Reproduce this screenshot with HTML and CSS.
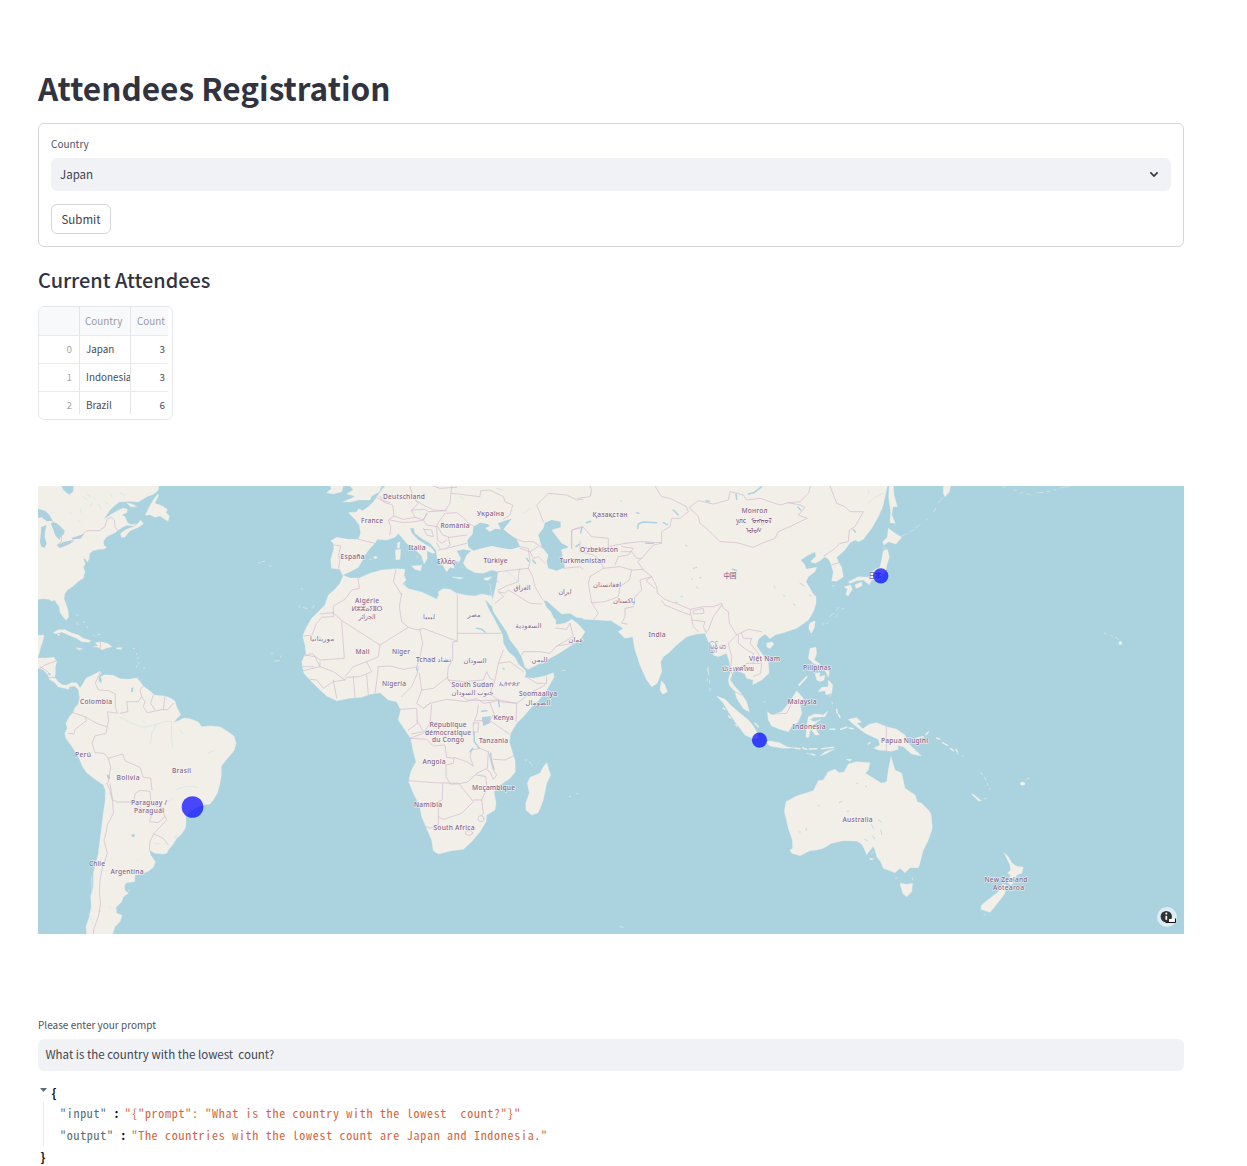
FILE: index.html
```html
<!DOCTYPE html>
<html lang="en">
<head>
<meta charset="utf-8">
<title>Attendees Registration</title>
<link rel="stylesheet" href="styles.css">
</head>
<body>
<main class="page">
  <h1 class="title">Attendees Registration</h1>
  <form class="form">
    <label class="label">Country</label>
    <div class="select"><span>Japan</span>
      <svg class="chevron" viewBox="0 0 10 7" width="10" height="7"><path d="M1.4 1.4 5 5l3.600-3.600"/></svg>
    </div>
    <button class="submit" type="button">Submit</button>
  </form>
  <h2 class="subtitle">Current Attendees</h2>
  <div class="table">
    <div class="row head"><span class="idx"></span><span class="name">Country</span><span class="num">Count</span></div>
    <div class="row"><span class="idx">0</span><span class="name">Japan</span><span class="num">3</span></div>
    <div class="row"><span class="idx">1</span><span class="name">Indonesia</span><span class="num">3</span></div>
    <div class="row last"><span class="idx">2</span><span class="name">Brazil</span><span class="num">6</span></div>
  </div>
  <svg class="map" viewBox="38 486 1146 448" width="1146" height="448">
    <!-- Americas -->
    <g transform="translate(30 480) scale(.33333)">
      <g class="land">
        <path d="M24 18H386L385 30 372 42 350 50 335 60 325 66 300 64 268 66 255 76 240 90 225 112 222 118 240 105 262 92 280 84 292 88 290 98 275 104 285 110 290 122 295 134 280 140 265 150 255 158 240 165 228 172 220 185 222 196 230 202 222 207 205 208 188 212 178 222 178 235 172 246 166 236 160 236 166 252 160 262 165 275 162 285 160 295 145 304 130 318 112 330 104 342 102 356 108 372 114 392 116 412 108 421 100 412 90 396 88 380 80 370 74 360 66 364 56 358 40 356 24 358Z"/>
        <path d="M272 160 290 148 310 140 325 130 332 120 340 132 325 142 300 152 284 172 274 172ZM346 106 358 80 370 60 384 42 385 48 374 70 388 74 400 80 412 88 408 98 418 108 414 124 402 116 390 108 375 112 360 104ZM290 69 305 71 320 80 302 80ZM292 128 305 134 318 131 308 138 294 136Z"/>
        <path d="M70 458 85 449 105 449 125 459 145 465 160 475 182 482 178 487 155 485 140 475 115 465 95 456 78 461ZM138 503 158 506 148 510ZM190 500 205 498 196 488 215 486 232 490 246 500 230 504 215 510 205 502ZM260 503 276 503 274 508 260 507ZM83 462 90 463 86 468Z"/>
        <path d="M24 466H42L38 485 32 500 28 520 24 530ZM24 534 50 534 72 532 80 545 76 560 76 580 74 592 84 605 96 614 110 616 125 608 140 608 150 624 160 640 148 650 146 630 134 618 118 620 116 628 100 624 84 620 75 608 58 598 54 584 40 570 24 564Z"/>
        <path d="M146 630 160 610 168 595 190 584 210 574 214 578 206 590 206 604 214 610 216 600 212 590 225 584 250 586 270 596 295 598 320 594 328 602 340 618 356 630 375 646 405 648 425 656 435 664 440 680 446 692 452 704 440 716 430 728 445 722 462 714 480 716 505 726 515 740 540 738 570 740 595 756 612 768 618 790 612 812 595 832 574 858 574 885 570 910 562 940 548 962 540 972 522 974 505 980 480 995 468 1010 468 1030 466 1045 455 1062 440 1075 430 1092 415 1110 410 1120 400 1122 375 1120 358 1110 362 1125 376 1145 370 1162 355 1174 335 1182 315 1185 314 1205 290 1208 284 1215 284 1230 295 1240 280 1250 275 1265 258 1282 260 1300 276 1306 270 1325 255 1340 248 1362H170L168 1340 178 1310 184 1280 182 1250 190 1220 190 1180 198 1150 205 1120 210 1080 215 1040 220 1000 226 960 226 930 220 914 195 898 170 878 158 860 145 830 125 798 108 775 104 760 112 745 108 730 118 710 130 697 134 685 145 672 150 650Z"/>
      </g>
      <g class="specks"><path d="M138 405 144 406M140 426 144 434M160 425 164 428M170 440 174 444M190 464 194 468M204 464 210 463M310 505h4M320 520v4M324 532v5M326 548v4M320 558v4M342 562v4M324 590v4M686 248 692 249M696 245 704 244M718 257 724 258M814 326 817 327M808 378v4M820 383 832 386M848 384 852 376M726 518v4M734 543 748 542M752 528v3M298 1232h-4"/></g>
      <g class="water">
        <path d="M24 86 45 92 58 104 68 122 50 124 35 112 24 114ZM34 140 50 136 46 150 44 170 50 190 44 203 34 200 30 185 32 165ZM62 128 78 128 90 138 104 152 102 162 92 170 88 180 76 166 70 150ZM80 196 100 186 128 180 120 192 90 204ZM124 174 150 166 162 162 152 176 128 178ZM95 18 100 30 118 44 130 34 130 18ZM304 625 310 622 309 636 303 635ZM230 882 240 888 240 898 232 894ZM304 1064 314 1062 313 1072 306 1070ZM54 576 64 584 56 586Z"/>
      </g>
      <path class="rivers" d="M160 50 172 60M186 70 180 80M190 50 196 58M240 40 246 50M206 72 212 86M150 84 154 98M120 94 122 102M172 44 182 50M270 38 282 46M226 66 234 72M146 120 152 126M62 100 70 96M270 712 300 728 340 742 380 733 400 726 425 724M380 733 365 760 362 790M425 724 424 770 428 800M452 752 458 762M534 820 552 812M338 724 346 728M440 928 470 918 505 922M412 966 428 954M440 1064 434 1074M374 1090 390 1092M236 940 242 944M322 1136 326 1140M236 1280 242 1284M206 1294 212 1294M184 1190 186 1240M176 1300 188 1330"/>
      <path class="borders" d="M24 95 60 118 80 135 95 160 94 185 82 195 92 200 128 186 130 176 150 172 170 152 208 152 225 140 232 116 245 112 253 120 255 140 262 150M30 565 45 555 78 543M54 576 30 560M58 592 76 592M212 488 210 506M212 575 200 600 196 610 206 630 235 632 256 642 256 680 262 700 232 695 236 720 228 758M128 698 165 710 170 722 135 748 132 762 115 760M165 710 200 730 230 740M228 760 195 768 186 790 195 818 222 820 235 835 278 822 285 842 330 862 340 892 362 894 366 930M235 835 242 860 238 885 234 910M240 912 248 960 262 966 310 966 316 940 330 931 360 934 362 960 375 978 395 982 405 1010M310 966 340 990 365 1005 358 1025 385 1028 405 1010 410 1020 372 1060 360 1085 358 1110M372 1062 400 1075 415 1095M230 910 240 930 248 965 250 1000 232 1035 228 1060 222 1080 232 1120 218 1160 210 1200 208 1240 212 1270 205 1310 192 1345 190 1362M342 615 330 630 335 650 325 665 290 665 294 695 270 700M335 650 345 665 340 680 352 698 400 688 412 690 430 670M370 645 362 670 375 690M405 650 402 670 400 690"/>
    </g>
    <!-- Europe, Arabia and Africa -->
    <g transform="translate(290 480) scale(.33333)">
      <g class="land">
        <path d="M158 285 150 268 125 265 122 240 132 205 130 190 122 182 140 172 175 178 205 178 212 160 208 135 195 118 175 98 200 96 206 86 218 92 235 80 250 66 262 48 275 30 285 18H960V422L900 418 860 412 840 400 815 402 795 385 770 362 762 362 768 380 782 395 790 412 797 420 798 434 825 430 845 418 862 430 885 455 870 480 845 495 810 518 775 538 740 555 715 568 705 562 700 545 695 530 680 505 660 480 650 455 630 425 610 395 605 375 610 350 615 330 620 305 625 275 605 270 580 280 555 278 530 265 520 250 530 225 545 212 520 208 500 212 512 235 508 245 490 240 492 265 480 262 470 275 455 250 442 235 438 210 420 190 395 175 375 160 372 145 360 143 365 160 385 180 425 205 435 218 428 220 410 212 412 235 402 252 395 228 375 208 350 190 335 172 325 160 315 172 290 180 262 178 255 190 240 205 225 225 215 245 205 262 180 275 165 282Z"/>
        <path d="M160 65 185 55 195 48 170 42 190 30 180 18H275L268 35 245 48 240 60 205 60 180 66ZM110 38 125 25 120 18H160L155 35 130 42ZM365 258 395 256 392 272 375 268ZM316 210 332 208 330 238 318 240ZM322 190 330 185 328 205 322 204ZM486 291 520 293 510 297ZM582 295 605 290 595 301 584 300ZM250 232 258 228 262 234 254 236Z"/>
        <path d="M160 286 180 294 208 294 240 280 275 270 320 266 345 268 342 285 348 300 338 312 355 326 395 336 425 350 440 358 447 345 445 335 460 326 480 328 500 340 530 346 555 348 575 342 605 348 608 362 604 378 590 362 585 360 595 385 612 415 625 440 638 465 640 490 655 515 675 532 685 552 705 570 708 582 704 592 730 595 765 588 790 578 792 592 770 630 745 662 730 675 700 710 680 730 662 760 658 785 668 820 675 840 676 875 660 895 630 915 612 935 618 970 615 990 590 1005 588 1025 570 1055 545 1085 520 1108 485 1112 445 1122 430 1112 425 1080 410 1045 395 1010 390 980 370 940 356 905 362 875 378 845 370 815 362 775 345 750 325 720 332 690 320 665 295 660 270 638 240 643 215 652 180 655 140 662 110 648 85 625 60 600 42 580 35 545 48 520 45 495 38 468 50 440 65 415 85 395 105 375 115 345 135 328 150 310Z"/>
        <path d="M770 848 782 885 770 910 760 960 745 998 725 1005 708 990 707 970 718 940 712 910 720 892 750 880 760 860Z"/>
      </g>
      <g class="specks"><path d="M380 230 384 232M816 571h10M706 840h4M718 848h4M724 854h3M838 950h4M860 941h4M240 238h4M344 312h3M500 245 506 250M514 258 518 262"/></g>
      <g class="water">
        <path d="M535 200 532 180 548 162 550 140 570 128 592 132 600 138 585 144 600 155 615 146 632 148 624 130 645 122 665 116 655 130 640 148 655 160 680 178 690 200 665 208 640 205 605 198 575 205 550 212ZM745 165 760 145 765 128 785 120 812 125 812 142 785 150 800 170 815 190 835 200 830 205 814 208 820 245 825 262 800 272 775 265 770 245 775 225 755 200ZM575 712 602 708 600 730 580 738ZM675 160 665 150 672 156Z"/>
      </g>
      <path class="lakes" d="M552 755 553 785 568 805M602 820 605 845 612 868M560 445 575 448 585 456M625 660 628 680M540 815 548 805M380 565 382 572M710 235 716 244M728 240 736 250M575 694 590 692M640 565 642 568"/>
      <path class="rivers" d="M535 895 560 885 585 885M600 312 605 350M510 50 520 56M700 100 720 85M650 275 665 285 710 340M620 25 640 30"/>
      <path class="borders" d="M205 178 255 190M132 195 152 198 146 225 150 240 146 265M255 48 285 68 308 75 312 108 295 120 302 140 300 165M270 48 275 60 300 68M360 18 368 50 385 70 365 90 375 112 340 118 312 108M368 55 400 75 430 90 465 92 480 70 485 18M365 90 405 88 415 95 470 92M375 112 400 120 412 100M300 120 340 128 375 125 400 120 410 135 440 140M410 100 400 120M485 40 570 50 572 32 600 30 640 50 645 65 668 75 660 105 640 118M470 100 500 98 520 112 535 130 550 138M465 100 440 135 458 165 480 172 530 165M400 145 410 165 430 170 425 150 402 148M440 140 442 180 455 190 470 180M475 172 480 195 470 205 530 190M445 210 470 205M440 190 450 205M690 200 715 205 720 245 715 265 670 270 625 275M660 170 700 185 730 185 760 205M690 205 720 215 745 200M720 215 730 235 745 230 765 250M715 265 728 290 735 320 755 355 765 365M625 330 650 318 685 305 685 285 690 265M615 370 640 350 625 335 645 340 655 330 720 370 755 372M612 300 625 305M760 125 740 75 775 40 830 45 860 60 900 55M845 205 845 150 875 140 900 145M820 265 870 260 900 285 905 370 920 390 905 418M695 525 700 515 750 515 780 520 800 498 850 490M800 498 850 470 840 430M797 444 830 448 840 430M430 18 450 25 500 22"/>
      <path class="borders" d="M38 468 65 466 80 430 95 412 130 410 130 398 90 402M130 400 130 378 165 358 185 330 208 325 204 295M130 400 160 425 270 495 355 442 385 450 400 445 502 484 502 345M155 425 163 535 90 540 65 520 45 528M335 340 328 380 335 425 355 442M318 270 310 305 335 345M502 460H632M502 484 488 486 488 540 475 560 472 590 475 600M390 450 398 490 390 530 380 560M270 495 265 530 230 545 190 560 165 590M265 560 300 558 340 568 385 560 382 580 365 620 335 650M230 545 245 575 210 590 170 592 165 600M265 560 262 590 255 640M130 600 140 655M190 590 195 655M230 585 235 645M45 525 75 530 90 560 40 572M90 545 90 560 130 575 165 600 130 605 100 625 80 600 60 598M388 580 395 630 430 625 475 590M395 630 380 670 400 685 420 670M475 600 520 605 580 600 590 575 600 595 610 600M640 510 625 550 615 600 600 640 630 665 680 670 720 640 765 615M625 550 660 545 700 575M708 590 740 610 770 610 770 590M475 600 500 630 530 660 580 662 625 660M40 560 70 560"/>
      <g transform="translate(270 540)">
        <path class="borders" d="M130 145 150 130 200 118 260 125 290 115 310 130 340 125 355 120 410 130 408 185M60 148 110 145 112 190 85 210M110 180 130 215 95 222M155 135 150 190 130 220 90 235 140 238 160 258 195 255 200 292 222 295 220 310 198 315 198 350 210 370M86 362 160 368 235 370M222 292 260 305 280 318 270 290 275 270 300 265 325 275 322 325 290 340 265 365 235 372 210 372M188 372 187 420 175 425 175 495 150 505 138 500M175 470 190 478 245 460 280 425 238 372M280 420 305 420 320 385 318 350 290 345M305 420 310 460 303 468M288 182 330 182 388 222M340 298 375 300 400 288M330 130 342 160 330 182M325 275 340 330 350 345 340 358 330 335 322 330M295 135 292 160 280 190 280 225M280 190 296 188 294 215 280 218"/>
        <ellipse class="borders" cx="267" cy="519" rx="11" ry="7"/><circle class="borders" cx="303" cy="476" r="9"/>
      </g>
    </g>
    <!-- Asia -->
    <g transform="translate(570 480) scale(.33333)">
      <path class="land" d="M40 18H952L945 50 938 80 925 110 905 145 880 178 865 185 855 180 840 188 825 210 800 232 805 245 815 262 820 290 800 304 785 302 790 275 782 250 775 238 765 230 750 242 735 250 722 245 738 228 735 215 715 225 692 240 705 255 708 268 740 262 735 275 715 290 708 305 720 325 728 340 738 350 738 370 730 395 715 420 680 445 640 458 615 465 600 476 585 462 565 478 560 498 575 520 595 545 597 580 575 600 548 614 550 600 530 595 525 582 510 575 495 565 488 580 480 600 495 620 512 638 530 665 538 695 520 686 500 655 495 635 478 615 475 600 482 575 478 545 470 520 445 530 430 525 432 505 415 485 405 460 380 462 350 470 320 495 300 515 280 530 272 545 275 575 262 610 245 620 230 600 210 555 195 510 188 470 165 475 145 455 160 445 135 430 120 420 40 418Z"/>
      <path class="land" d="M274 602 285 615 292 635 278 643 270 630ZM590 490 605 485 612 492 600 506 590 500ZM720 430 735 423 732 445 724 460 716 445ZM720 505 738 502 740 520 733 540 750 552 748 558 730 550 715 535ZM735 580 750 578 748 590 765 586 762 600 750 605 740 600ZM765 570 778 575 775 592ZM775 600 788 615 785 640 768 645 765 632 745 635 755 622 775 620ZM684 615 710 588 712 592 688 618Z"/>
      <path class="specks" d="M415 560V580M412 595v6M420 625v8M780 410 790 400M800 390 805 382M790 318 792 316"/>
      <path class="lakes" d="M203 145 205 132 220 126 260 128M535 42 552 38 575 20M228 190 250 190M18 200 26 194M32 158 36 142M50 128 62 124M200 98 206 100M310 90 325 105M280 128 292 134M408 62 418 64M498 42 500 58M488 268 500 272M684 82 692 90M850 148 856 156"/>
      <path class="lakes small" d="M346 196 352 198M370 265 380 262M364 296 368 298M388 292 394 294M612 318 616 324M690 310 704 318M718 345 724 348M670 372 676 376M640 345 645 350M60 45 64 42M150 60 154 64M380 320 384 326M316 366 322 368M332 350 338 350"/>
      <path class="borders" d="M358 82 385 62 430 72 475 60 480 35 520 45 530 60 570 55 630 75 655 68 690 75 705 82 685 105 712 115 690 125 660 140 625 155 615 175 575 190 550 202 500 188 450 185 415 150 390 130 385 110ZM350 82 355 95 330 115 305 115 300 140 275 155 275 190 250 195 215 235 203 245 220 270 245 290 260 320 262 340 285 358 330 375 360 388 400 380 430 380 455 370 460 385 475 395 478 430 500 465 535 448 575 455M255 18 275 50 300 55 350 80M22 55 60 50 65 30 60 18M655 68 690 65 715 40 722 18M780 18 800 70 825 80 840 95 880 95 855 140 838 150 835 185 810 190 795 205 762 228M165 190 210 185 275 188M155 200 190 205 175 225 145 230 135 255M155 215 185 215 200 235 215 235M5 205V150L40 142 65 170 115 175 115 200 165 190M30 185 30 215 70 225 90 240 100 265M60 290 100 265 150 260 185 270 220 268M185 270 178 300 150 320 145 350 105 365 65 368 55 310 60 290M65 368 85 400 70 420M245 290 210 300 215 330 195 350 190 380 165 385 165 410 155 430 172 432M245 290 228 302 255 325M275 362 285 375 320 390 360 405 362 390M370 392 400 385 402 400 372 402ZM362 400 370 440 385 455M365 420 405 425 400 440 410 460M455 375 430 410 415 450 408 455M500 465 475 490 485 530 482 570 490 590M505 465 505 490 530 510 550 520 550 550M515 460 520 475 545 475 540 490 565 520 575 550 572 580 550 590M520 570 530 550 570 550M785 255 808 248M490 632 515 645"/>
    </g>
    <!-- Southeast Asia -->
    <g transform="translate(690 620) scale(.33333)">
      <path class="land" d="M80 228 105 238 125 258 150 280 175 300 190 318 200 335 205 355 190 356 165 345 150 325 135 305 115 275 100 250ZM232 275 245 285 275 275 300 245 320 212 340 235 330 250 335 280 325 305 305 320 295 335 270 328 245 318 235 300ZM225 365 240 363 268 368 290 380 312 384 280 385 240 378ZM355 290 375 282 400 285 414 273 405 290 370 292 360 300 375 305 392 298 370 315 388 345 375 345 362 325 356 352 348 352 350 320ZM475 298 500 293 514 306 500 310 518 326 540 312 560 308 590 320 620 328 645 345 655 370 694 408 665 402 640 380 622 376 625 388 605 394 565 390 552 384 570 375 565 358 530 342 515 332 485 308ZM390 408 405 395 434 386 410 400Z"/>
      <path class="specks wide" d="M315 385 330 386M338 384 350 388M358 387 380 386M395 386 430 382M440 268 442 280M446 284 450 292M420 328 434 328M452 328 470 322M478 324 490 326M680 355 700 350M708 344 715 336M740 354 750 358M758 368 772 376M782 386 790 392M798 388 802 396M535 372 540 368M100 264 104 268M116 288 122 294M138 314 140 318M195 310 205 320M364 402 374 405"/>
      <path class="specks" d="M420 230 424 222M426 246 428 252M52 145 56 165M58 180 58 190M222 246h3"/>
      <path class="borders" d="M240 275 250 282 290 280 310 240M589 320V392"/>
    </g>
    <!-- Oceania -->
    <g transform="translate(760 740) scale(.33333)">
      <path class="land" d="M393 50 405 90 425 100 435 145 465 165 472 185 485 190 505 210 513 222 517 265 505 300 490 330 478 375 475 383 450 383 435 398 420 385 405 398 370 385 362 365 350 350 345 330 340 318 320 344 312 325 305 312 290 303 250 302 215 310 190 325 170 330 150 332 120 347 95 340 90 330 98 325 97 300 85 265 78 235 73 215 78 185 110 168 160 152 175 122 190 120 205 95 225 88 238 98 252 96 265 72 290 65 330 68 325 90 316 100 365 130 380 125 385 90ZM420 430 440 433 458 430 455 455 440 470 428 460ZM732 338 745 350 755 368 768 378 790 382 785 400 770 405 755 435 745 430 752 405 742 400 752 390 750 375ZM728 432 738 436 735 460 720 480 700 505 690 517 662 508 665 495 690 475 715 455ZM634 162 640 163 665 183 655 182ZM258 58 275 58 270 64ZM328 355 342 356 332 360Z"/>
      <ellipse class="land" cx="788" cy="131" rx="7" ry="5"/>
      <path class="specks" d="M798 120 808 114M662 98 668 104M674 112 678 120M682 130 684 136M690 146v3M672 176 678 176M408 412v4M458 414v6M672 524h4M334 342 342 336M590 42h5M606 48h5M140 40 150 42M-420 560 -410 562"/>
      <path class="lakes small" d="M290 130h3M238 188 246 184M174 197h4M334 254 342 266M338 288 344 296M362 270 366 284M314 298 322 302M138 264v8M118 276h3M316 140h3M262 214h4M356 240 364 246"/>
    </g>
    <!-- Japan and the north Pacific -->
    <g transform="translate(800 480) scale(.33333)">
      <path class="land" d="M265 145 285 160 305 172 288 192 265 185 252 196 248 186 262 172ZM250 212 262 208 268 230 262 250 256 275 240 292 215 300 208 314 190 300 170 302 150 310 145 306 175 290 205 292 222 270 240 262 246 235ZM165 314 185 306 186 318 168 325ZM133 320 152 315 157 328 145 347 138 345 142 328ZM268 18H280L282 45 292 80 279 80 275 105 286 130 270 128 272 95 266 50ZM430 18H452L448 35 435 50 430 40ZM30 430 45 423 42 443 34 458 28 445Z"/>
      <circle class="land" cx="961" cy="489" r="5"/>
      <path class="specks thin" d="M305 168 322 160M328 156 340 150M346 144 360 134M380 120 384 116M402 95 408 84M414 68 428 54M608 20 618 24M640 30 650 32M660 40 668 38M680 42 690 44M708 39 730 37M740 34 750 34M760 28 768 30M780 24 806 19M912 458 918 462M932 466 938 470M946 472 956 478M128 386h4M108 410 114 402M68 432h4M80 430 84 428M96 318h6M248 204h12"/>
      <path class="rivers" d="M205 70 220 55 250 40M206 30v10"/>
    </g>
    <g class="names">
      <text x="404" y="498.500" textLength="42">Deutschland</text>
      <text x="372" y="523" textLength="22">France</text>
      <text x="490.500" y="515.500" textLength="27">Україна</text>
      <text x="455" y="528" textLength="29">România</text>
      <text x="417" y="549.500" textLength="17">Italia</text>
      <text x="352.500" y="558.500" textLength="24">España</text>
      <text x="446" y="563.500" textLength="18">Ελλάς</text>
      <text x="495.500" y="562.500" textLength="24">Türkiye</text>
      <text x="610" y="517.300" textLength="35">Қазақстан</text>
      <text x="599" y="551.500" textLength="38">O'zbekiston</text>
      <text x="582.500" y="563" textLength="46">Turkmenistan</text>
      <text x="754.500" y="512.500" textLength="26">Монгол</text>
      <text x="741" y="523" textLength="10">улс</text><text x="761" y="523" textLength="21">ᠮᠣᠩᠭᠣᠯ</text>
      <text x="754" y="532.500" textLength="16">ᠤᠯᠤᠰ</text>
      <text x="730" y="578.300" textLength="13">中国</text>
      <text x="875" y="577.500" textLength="13">日本</text>
      <text x="522" y="589.500" textLength="17">العراق</text>
      <text x="565" y="593.500" textLength="13">ایران</text>
      <text x="607" y="586.500" textLength="28">افغانستان</text>
      <text x="624" y="603" textLength="22">پاکستان</text>
      <text x="367" y="603.300" textLength="24">Algérie</text>
      <text x="367" y="611" textLength="31">ⵍⵣⵣⴰⵢⴻⵔ</text>
      <text x="367" y="619" textLength="17">الجزائر</text>
      <text x="429" y="618.500" textLength="12">ليبيا</text>
      <text x="474" y="616.500" textLength="13">مصر</text>
      <text x="528.500" y="628" textLength="26">السعودية</text>
      <text x="322" y="640.500" textLength="24">موريتانيا</text>
      <text x="576" y="641.500" textLength="15">عمان</text>
      <text x="539.500" y="661.500" textLength="16">اليمن</text>
      <text x="362.500" y="653.500" textLength="14">Mali</text>
      <text x="401" y="653.500" textLength="18">Niger</text>
      <text x="433.500" y="662" textLength="35">Tchad تشاد</text>
      <text x="475" y="662.500" textLength="23">السودان</text>
      <text x="394" y="686.300" textLength="24">Nigeria</text>
      <text x="472.500" y="686.500" textLength="42">South Sudan</text>
      <text x="472.500" y="695" textLength="42">جنوب السودان</text>
      <text x="509" y="686" textLength="21">ኢትዮጵያ</text>
      <text x="538" y="696.300" textLength="38">Soomaaliya</text>
      <text x="538" y="704.500" textLength="25">الصومال</text>
      <text x="503.500" y="720" textLength="20">Kenya</text>
      <text x="448" y="726.500" textLength="37">République</text>
      <text x="448" y="734.500" textLength="46">démocratique</text>
      <text x="448" y="742.300" textLength="32">du Congo</text>
      <text x="493.500" y="743" textLength="29">Tanzania</text>
      <text x="434" y="764" textLength="23">Angola</text>
      <text x="493.500" y="789.700" textLength="43">Moçambique</text>
      <text x="428" y="806.700" textLength="28">Namibia</text>
      <text x="454" y="829.700" textLength="41">South Africa</text>
      <text x="657" y="637" textLength="17">India</text>
      <text class="mm" x="717.500" y="649" textLength="17">မြန်မာ</text>
      <text x="764.500" y="661" textLength="31">Việt Nam</text>
      <text x="737.500" y="671" textLength="32">ประเทศไทย</text>
      <text x="817" y="669.500" textLength="28">Pilipinas</text>
      <text x="802" y="703.700" textLength="29">Malaysia</text>
      <text x="809" y="728.700" textLength="33">Indonesia</text>
      <text x="904.500" y="742.700" textLength="47">Papua Niugini</text>
      <text x="857.500" y="822" textLength="30">Australia</text>
      <text x="1006" y="882" textLength="43">New Zealand</text>
      <text x="1008.500" y="889.500" textLength="31">Aotearoa</text>
      <text x="96" y="703.700" textLength="32">Colombia</text>
      <text x="83" y="757" textLength="16">Perú</text>
      <text x="181.500" y="772.700" textLength="19">Brasil</text>
      <text x="128" y="780.300" textLength="23">Bolivia</text>
      <text x="149" y="805" textLength="36">Paraguay /</text>
      <text x="149" y="812.500" textLength="30">Paraguái</text>
      <text x="97" y="866" textLength="16">Chile</text>
      <text x="127" y="873.700" textLength="33">Argentina</text>
    </g>
    <g class="points">
      <circle cx="192.500" cy="807" r="10.800"/><circle cx="759.500" cy="740.200" r="7.600"/><circle cx="880.800" cy="575.800" r="7.600"/>
    </g>
    <circle cx="1167" cy="917" r="10" fill="#fff" fill-opacity=".6"/>
    <circle cx="1166.300" cy="916.600" r="5.700" fill="#303437"/>
    <path d="M1166.300 915.800v4" stroke="#fff" stroke-width="1.700" fill="none"/><circle cx="1166.300" cy="913.600" r="1" fill="#fff"/>
    <path d="M1169 919h5.500v3h-5.500z" fill="#fff"/><path d="M1165.500 922.500h10v-4" stroke="#111" fill="none"/>
  </svg>
  <label class="label prompt">Please enter your prompt</label>
  <div class="input">What is the country with the lowest&nbsp; count?</div>
  <div class="json">
    <div class="line open"><span class="arrow"></span><b>{</b></div>
    <div class="body">
      <div class="line"><span class="key">"input"</span><b class="colon">:</b><span class="val">"{"prompt": "What is the country with the lowest&nbsp; count?"}"</span></div>
      <div class="line"><span class="key">"output"</span><b class="colon">:</b><span class="val">"The countries with the lowest count are Japan and Indonesia."</span></div>
    </div>
    <div class="line close"><b>}</b></div>
  </div>
</main>
</body>
</html>
```
FILE: styles.css
```css
* { box-sizing: border-box; }
body { margin: 0; background: #fff; color: #31333f; font-family: "Noto Sans CJK JP", "Noto Sans CJK SC", "Open Sans", sans-serif; font-size: 11.500px; overflow: hidden; }
.page { width: 1184px; height: 1166px; padding: 66px 0 0 38px; display: flex; flex-direction: column; }
.title { margin: 0 0 15px; height: 42px; line-height: 42px; font-size: 31.550px; font-weight: 700; white-space: nowrap; }
.form { height: 124px; border: 1px solid #d5d6d9; border-radius: 6px; padding: 12px; display: flex; flex-direction: column; align-items: flex-start; }
.label { font-size: 10px; line-height: 16px; height: 16px; color: #50525c; }
.select { margin-top: 6px; width: 100%; height: 33px; border-radius: 6px; background: #f0f2f6; padding: 0 12px 1px 9px; display: flex; align-items: center; justify-content: space-between; line-height: 20px; color: #41434e; }
.chevron { fill: none; stroke: #31333f; stroke-width: 1.600; margin-top: 1px; }
.submit { margin-top: 13px; width: 60px; height: 30px; border: 1px solid #d5d6d9; border-radius: 6px; background: #fff; padding: 0; color: #41434e; font: 11.500px/20px "Noto Sans CJK JP", sans-serif; }
.subtitle { margin: 19px 0 12px; height: 28px; line-height: 28px; font-size: 19.900px; font-weight: 500; white-space: nowrap; }
.table { width: 135px; height: 114px; flex: none; border: 1px solid #e6e7ea; border-radius: 6px; overflow: hidden; font-size: 9.900px; color: #4a4c57; padding-right: 4px; }
.row { height: 28px; display: grid; grid-template-columns: 41px 51px 37px; line-height: 26px; border-bottom: 1px solid #e9eaed; }
.row.head { height: 29px; line-height: 29px; background: #f8f9fb; color: #989aa4; }
.row span { border-right: 1px solid #e4e5e9; overflow: hidden; white-space: nowrap; }
.row .idx { text-align: right; padding-right: 7px; color: #a3a5ad; }
.row .name { padding-left: 6px; }
.row.head .name { padding-left: 5px; }
.row .num { text-align: right; padding-right: 3px; border-right: 0; }
.row.last { border-bottom: 0; }
.row.last span { height: 22px; }
.map { display: block; flex: none; margin-top: 66px; background: #aad3df; }
.land { fill: #f2efe9; stroke: #f2efe9; stroke-width: 1; stroke-linejoin: round; }
.water { fill: #aad3df; }
.lakes, .rivers, .borders, .specks { fill: none; stroke-linecap: round; stroke-linejoin: round; }
.lakes { stroke: #aad3df; stroke-width: 4.500; }
.small { stroke: #bddbe3; stroke-width: 3; }
.rivers { stroke: #d5e4e4; stroke-width: 2.200; }
.borders { stroke: #d4c0d0; stroke-width: 2.300; }
.specks { stroke: #d6e4e3; stroke-width: 2.800; }
.wide { stroke-width: 4.500; stroke: #ebede7; }
.thin { stroke-width: 2.200; }
.names { font-family: "Noto Sans", "DejaVu Sans", "Noto Sans CJK SC", sans-serif; font-size: 6.700px; font-weight: 500; text-anchor: middle; fill: #84648a; paint-order: stroke; stroke: #f8f6f3; stroke-opacity: .75; stroke-width: 1.300px; stroke-linejoin: round; }
.mm { font-size: 8px; }
.points { fill: #00f; fill-opacity: .7; }
.prompt { margin-top: 83px; }
.input { margin-top: 6px; height: 32px; flex: none; border-radius: 6px; background: #f0f2f6; padding: 0 7.500px; line-height: 31px; color: #41434e; }
.json { margin-top: 11px; font-family: "Noto Sans Mono CJK JP", "Liberation Mono", monospace; font-size: 12px; letter-spacing: .715px; display: flex; flex-direction: column; }
.line { height: 22px; line-height: 21px; display: flex; white-space: pre; }
.line b { color: #111; }
.open { height: 20px; gap: 4px; padding-left: 2px; }
.arrow { width: 7px; height: 4px; margin-top: 6px; background: #586e75; clip-path: polygon(0 0, 100% 0, 50% 100%); }
.body { margin-left: 5px; padding-left: 16px; border-left: 1px solid #e6e7ea; }
.key { color: #586e75; }
.colon { margin: 0 4.500px 0 6.500px; }
.val { color: #cb4b16; opacity: .85; }
.close { padding-left: 2px; }
```
